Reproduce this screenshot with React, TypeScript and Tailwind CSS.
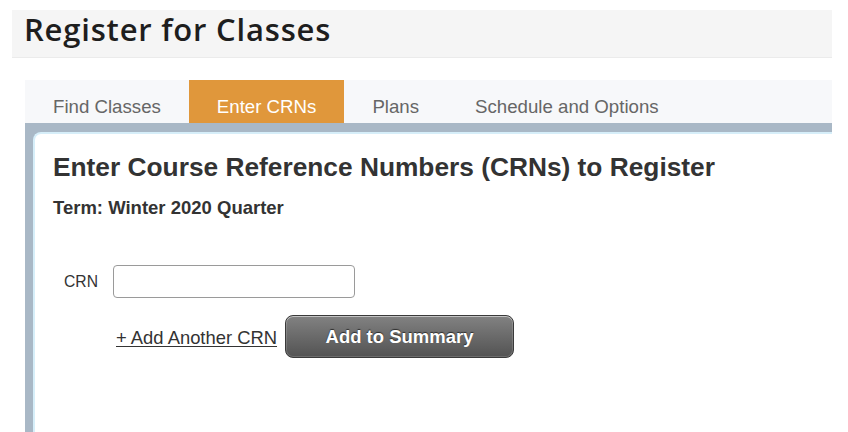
import React from "react";

const tabs = ["Find Classes", "Enter CRNs", "Plans", "Schedule and Options"];

function TabBar({ active }: { active: string }) {
  return (
    <div className="flex h-[43px] bg-[#f7f8fa]">
      {tabs.map((t) => (
        <div
          key={t}
          className={
            t === active
              ? "h-[43px] px-[28px] pt-[16px] bg-[#e0973b] text-white"
              : "h-[43px] px-[28px] pt-[16px] text-[#666]"
          }
        >
          <span className="text-[18.67px] leading-[21px]">{t}</span>
        </div>
      ))}
    </div>
  );
}

export default function App() {
  return (
    <div className="h-[432px] overflow-hidden bg-white pt-[10px] pl-[12px] font-['Liberation_Sans',Arial,sans-serif]">
      <div className="w-[820px] h-[48px] bg-[#f5f5f5] border-b border-[#ebebeb] pl-[12px]">
        <h1 className="font-['Open_Sans',sans-serif] font-semibold text-[31px] tracking-[0.8px] leading-[38px] text-[#1e1e1e]">
          Register for Classes
        </h1>
      </div>

      <div className="ml-[13px] mt-[22px] w-[807px] flex flex-col h-[360px]">
        <TabBar active="Enter CRNs" />
        <div className="flex-1 bg-[#a9b8c6] pl-[8px] pt-[9px]">
          <div className="h-full bg-white rounded-tl-[8px] border-l-2 border-t-2 border-[#d6eef9] pl-[18px] pt-[18px]">
            <h2 className="text-[26.3px] leading-[30px] font-bold text-[#333]">
              Enter Course Reference Numbers (CRNs) to Register
            </h2>
            <p className="mt-[15px] text-[18.5px] leading-[21px] font-bold text-[#333]">
              Term: Winter 2020 Quarter
            </p>

            <div className="mt-[47px] ml-[11px] flex items-center gap-[15px]">
              <label className="text-[15.7px] text-[#333]">CRN</label>
              <input
                type="text"
                className="w-[242px] h-[33px] rounded-[4px] border border-[#9a9a9a] bg-white outline-none"
              />
            </div>

            <div className="mt-[17px] ml-[63px] flex items-end gap-[8px]">
              <a href="#" className="mb-[10px] text-[18.4px] leading-[21px] text-[#333] underline underline-offset-[2px]">
                + Add Another CRN
              </a>
              <button
                type="button"
                className="w-[229px] h-[43px] rounded-[8px] border border-[#3a3a3a] bg-gradient-to-b from-[#828282] to-[#535353] shadow-[inset_0_1px_0_rgba(255,255,255,0.45),inset_0_0_0_1px_rgba(255,255,255,0.15)] text-white font-bold text-[18.5px] [text-shadow:0_-1px_1px_rgba(0,0,0,0.6)]"
              >
                Add to Summary
              </button>
            </div>
          </div>
        </div>
      </div>
    </div>
  );
}
